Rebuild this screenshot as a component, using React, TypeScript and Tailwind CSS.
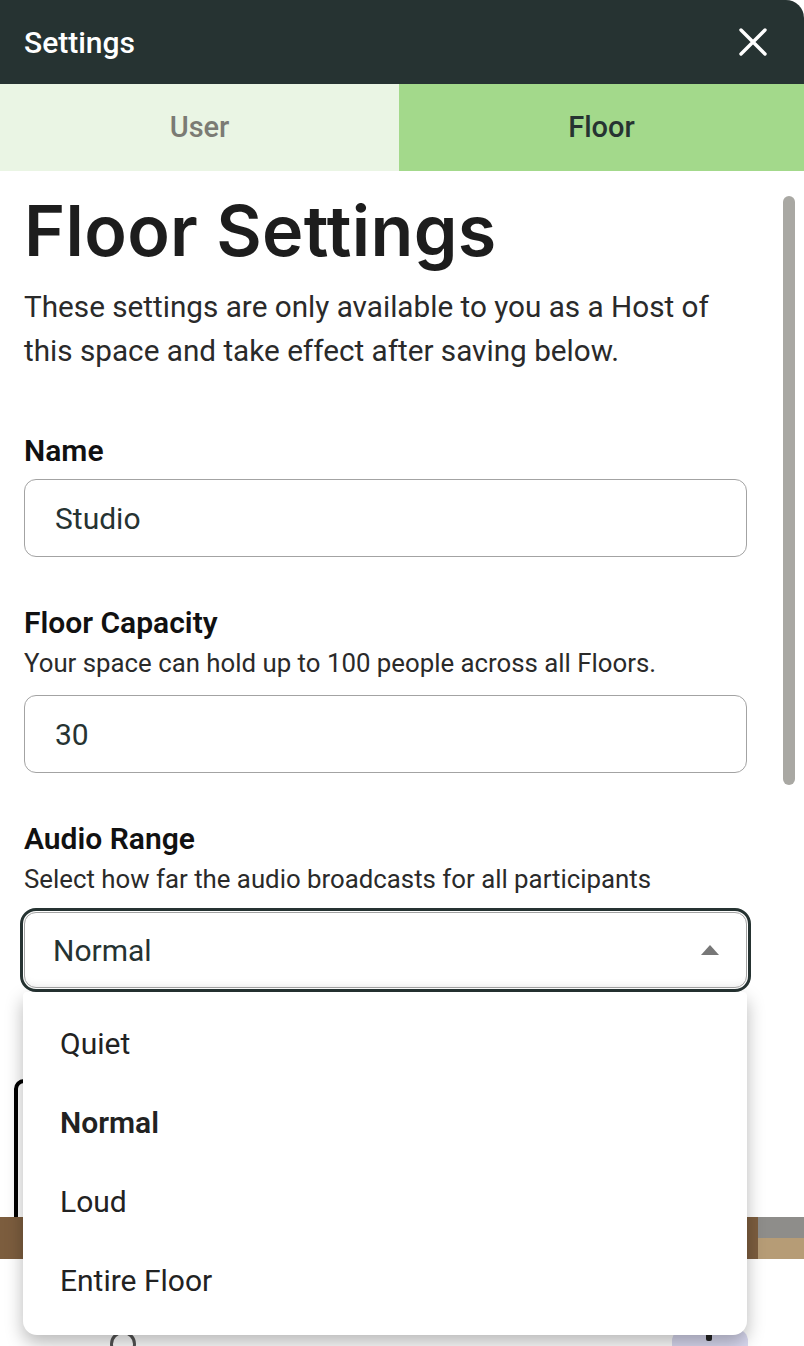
import React from "react";

export default function App() {
  return (
    <div className="relative w-[804px] h-[1346px] overflow-hidden bg-white font-['Roboto',sans-serif] text-[#222]">
      {/* Modal */}
      <div className="relative z-10 flex h-[1217px] flex-col overflow-hidden rounded-tr-[18px] rounded-br-[14px] bg-white">
        <div className="flex h-[84px] shrink-0 items-center justify-between bg-[#263332] pl-6 pr-[36px]">
          <span className="text-[30px] font-medium text-white">Settings</span>
          <svg width="30" height="30" viewBox="0 0 30 30" className="text-white">
            <path d="M3 3 L27 27 M27 3 L3 27" stroke="currentColor" strokeWidth="3.4" strokeLinecap="round" />
          </svg>
        </div>
        <div className="flex h-[87px] shrink-0">
          <div className="flex w-[399px] items-center justify-center bg-[#eaf5e4] text-[29px] font-medium text-[#7b7b74]">User</div>
          <div className="flex flex-1 items-center justify-center bg-[#a3d98b] text-[29px] font-medium text-[#263332]">Floor</div>
        </div>
        <div className="relative flex-1 pl-6 pr-[57px] pt-[24px]">
          <div className="absolute right-[9px] top-[25px] h-[589px] w-[12px] rounded-full bg-[#a9a8a3]" />
          <h1 className="font-['Inter',sans-serif] text-[70px] font-semibold leading-[72px] tracking-[0.005em] text-[#1d1d1d]">Floor Settings</h1>
          <p className="mt-[18px] text-[29.7px] leading-[44px] text-[#2a2a2a]">
            These settings are only available to you as a Host of this space and take effect after saving below.
          </p>
          <div className="mt-[62px] text-[30px] font-semibold leading-[32px] text-[#111]">Name</div>
          <div className="mt-[12px] flex h-[78px] items-center rounded-[12px] border border-[#a3a3a3] pl-[30px] text-[30px] text-[#263332]">Studio</div>
          <div className="mt-[50px] text-[30px] font-semibold leading-[32px] text-[#111]">Floor Capacity</div>
          <div className="mt-[8px] text-[25.8px] leading-[32px] text-[#2a2a2a]">Your space can hold up to 100 people across all Floors.</div>
          <div className="mt-[16px] flex h-[78px] items-center rounded-[12px] border border-[#a3a3a3] pl-[30px] text-[30px] text-[#263332]">30</div>
          <div className="mt-[50px] text-[30px] font-semibold leading-[32px] text-[#111]">Audio Range</div>
          <div className="mt-[8px] text-[25.8px] leading-[32px] text-[#2a2a2a]">Select how far the audio broadcasts for all participants</div>
          <div className="mt-[17px] flex h-[76px] items-center justify-between rounded-[12px] border border-[#a3a3a3] pl-[28px] pr-[26px] text-[30px] text-[#263332] outline-[3px] outline-solid outline-[#263332] outline-offset-[1px] shadow-[inset_0_-8px_10px_-8px_rgba(0,0,0,0.08)]">
            <span>Normal</span>
            <svg width="20" height="12" viewBox="0 0 20 12">
              <path d="M10 1 L19 11 L1 11 Z" fill="#777" />
            </svg>
          </div>
          <div className="ml-[-10px] mt-[91px] h-[200px] w-[700px] rounded-[10px] border-[4px] border-black" />
        </div>
      </div>

      {/* Background strip */}
      <div className="flex h-[42px]">
        <div className="flex-1 bg-[#7c5d3e]" />
        <div className="flex w-[46px] flex-col">
          <div className="h-1/2 bg-[#8e8d8a]" />
          <div className="h-1/2 bg-[#b69c76]" />
        </div>
      </div>
      <div className="relative h-[87px] bg-white">
        <div className="absolute left-[110px] top-[72px] h-[26px] w-[26px] rounded-full border-[3px] border-[#555]" />
        <div className="absolute left-[672px] top-[70px] h-[40px] w-[76px] rounded-[12px] bg-[#d9d9f0]" />
        <div className="absolute left-[706px] top-[74px] h-[8px] w-[6px] rounded-[2px] bg-[#222]" />
      </div>

      {/* Dropdown menu */}
      <div className="absolute left-[23px] top-[992px] z-20 w-[724px] rounded-b-[14px] rounded-t-[4px] bg-white pb-[15px] pt-[12px] shadow-[0_8px_18px_rgba(0,0,0,0.28)]">
        {["Quiet", "Normal", "Loud", "Entire Floor"].map((o) => (
          <div
            key={o}
            className={
              o === "Normal"
                ? "flex h-[79px] items-center pl-[37px] text-[30px] font-semibold text-[#222]"
                : "flex h-[79px] items-center pl-[37px] text-[30px] text-[#222]"
            }
          >
            {o}
          </div>
        ))}
      </div>
    </div>
  );
}
